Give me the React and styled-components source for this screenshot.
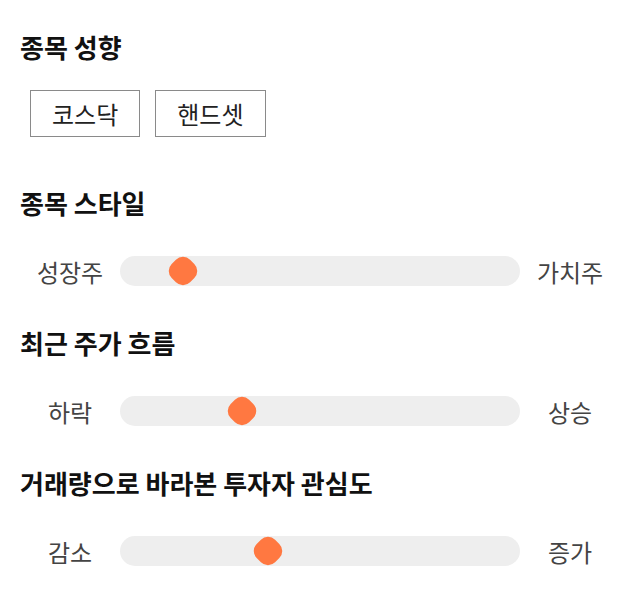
import React from "react";
import styled, { createGlobalStyle } from "styled-components";

const GlobalStyle = createGlobalStyle`
  body {
    margin: 0;
    background: #fff;
    font-family: "Noto Sans CJK KR", "Noto Sans", sans-serif;
  }
`;

const Page = styled.div`
  display: flex;
  flex-direction: column;
  padding: 31px 20px 0;
`;

const Section = styled.section`
  display: flex;
  flex-direction: column;
  margin-bottom: ${(p) => p.$after}px;
`;

const Title = styled.h3`
  margin: 0 0 ${(p) => p.$gap}px;
  font-size: 26px;
  line-height: 32px;
  font-weight: 700;
  color: #111;
`;

const ButtonRow = styled.div`
  display: flex;
  gap: 15px;
  padding-left: 10px;
`;

const Chip = styled.button`
  font-family: inherit;
  font-size: 24px;
  line-height: 45px;
  padding: 0 21px;
  border: 1px solid #8a8a8a;
  background: #fff;
  color: #222;
  cursor: pointer;
`;

const SliderRow = styled.div`
  display: flex;
  align-items: center;
  height: 30px;
`;

const SideLabel = styled.span`
  width: 100px;
  text-align: center;
  font-size: 24px;
  color: #444;
`;

const Track = styled.div`
  position: relative;
  flex: 1;
  height: 30px;
  border-radius: 15px;
  background: #eeeeee;
`;

const Thumb = styled.div`
  position: absolute;
  top: 50%;
  width: 26px;
  height: 26px;
  margin: -13px 0 0 -13px;
  border-radius: 10px;
  background: #ff7841;
  transform: rotate(45deg);
`;

const sliders = [
  { title: "종목 스타일", left: "성장주", right: "가치주", value: 13 },
  { title: "최근 주가 흐름", left: "하락", right: "상승", value: 29 },
  { title: "거래량으로 바라본 투자자 관심도", left: "감소", right: "증가", value: 36 },
];

const Slider = ({ left, right, value }) => {
  const center = 14.5 + (value / 100) * 371;
  return (
    <SliderRow>
      <SideLabel>{left}</SideLabel>
      <Track>
        <Thumb style={{ left: `${center}px` }} />
      </Track>
      <SideLabel>{right}</SideLabel>
    </SliderRow>
  );
};

const App = () => {
  return (
    <Page>
      <GlobalStyle />
      <Section $after={50}>
        <Title $gap={27}>종목 성향</Title>
        <ButtonRow>
          <Chip>코스닥</Chip>
          <Chip>핸드셋</Chip>
        </ButtonRow>
      </Section>
      {sliders.map((s) => (
        <Section key={s.title} $after={41}>
          <Title $gap={37}>{s.title}</Title>
          <Slider left={s.left} right={s.right} value={s.value} />
        </Section>
      ))}
    </Page>
  );
};

export default App;
